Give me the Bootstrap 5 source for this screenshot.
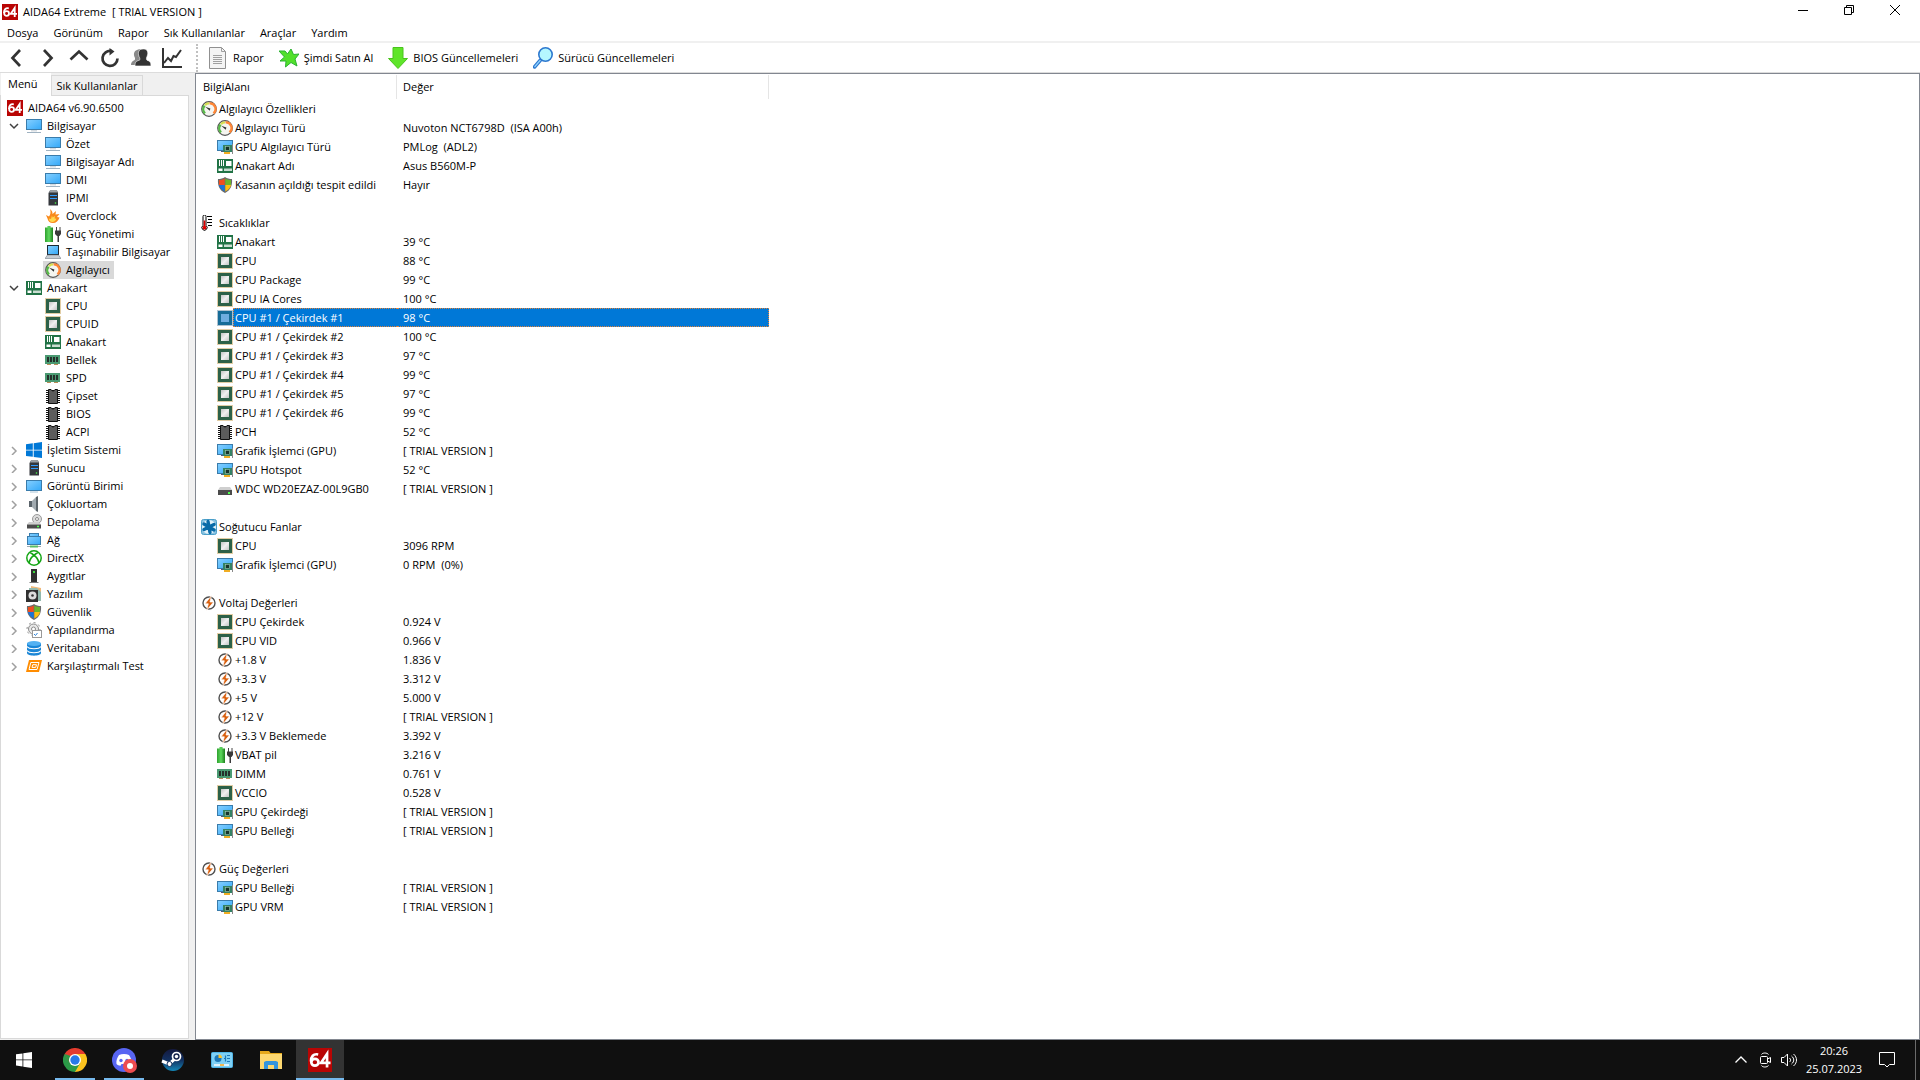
<!DOCTYPE html>
<html lang="tr">
<head>
<meta charset="utf-8">
<meta name="viewport" content="width=device-width, initial-scale=1">
<title>AIDA64 Extreme [ TRIAL VERSION ]</title>
<link href="https://cdn.jsdelivr.net/npm/bootstrap@5.3.0/dist/css/bootstrap.min.css" rel="stylesheet">
<style>
  body { font-family: "Open Sans", "Noto Sans", sans-serif; font-size: 11px; line-height: 18px; color: #000; background: #fff; }
  a, a:hover { color: inherit; text-decoration: none; }
  button { color: inherit; background: none; border: 0; padding: 0; }
  svg { display: block; flex: none; }
  .ic { width: 16px; height: 16px; }
  .keep-space { white-space: pre; }

  .title-strip { height: 24px; padding-left: 2px; }
  .title-strip .caption { margin-left: 5px; }
  .win-controls { margin-right: 2px; }
  .win-controls button { width: 46px; height: 20px; display: flex; align-items: center; justify-content: center; }
  .menu-strip { height: 19px; padding-left: 7px; gap: 15px; border-bottom: 2px solid #f0f0f0; }
  .tool-strip { height: 30px; border-bottom: 1px solid #dcdcdc; }
  .tool-nav { padding-left: 1px; }
  .tool-nav button { width: 31px; height: 28px; display: flex; align-items: center; justify-content: center; }
  .tool-sep { width: 2px; height: 28px; margin: 0 10px 0 9px; border-left: 2px dotted #c0c0c0; }
  .tool-action { display: flex; align-items: center; gap: 5px; margin-right: 15px; }
  .tool-action svg { width: 20px; height: 22px; }

  .side-pane { width: 195px; background: #f0f0f0; }
  .tab-strip { height: 22px; padding-left: 1px; }
  .tab-strip button { height: 20px; border: 1px solid #d9d9d9; border-bottom: 0; padding: 0 4px; width: 92px; }
  .tab-strip button.chosen { height: 23px; line-height: 21px; background: #fff; border: 0; width: 50px; padding: 0 7px 2px; text-align: left; z-index: 1; }
  .tree-box { background: #fff; border: 1px solid #d9d9d9; margin-right: 6px; margin-bottom: 1px; padding-top: 3px; }
  .tree-box ul { list-style: none; margin: 0; padding: 0; }
  .tree-row { height: 18px; display: flex; align-items: center; padding-left: 6px; }
  .tree-row button { width: 19px; height: 18px; display: flex; align-items: center; padding-left: 2px; }
  .tree-row a { display: flex; align-items: center; height: 18px; }
  .tree-row a span { padding: 0 4px 0 5px; white-space: nowrap; }
  .tree-box ul ul .tree-row { padding-left: 42px; }
  .tree-box ul ul .tree-row a { padding-left: 2px; }
  .tree-row a.current { background: #d9d9d9; }

  .detail-pane { border: 1px solid #828790; }
  .sensor-grid { width: 573px; table-layout: fixed; border-collapse: separate; border-spacing: 0; }
  .sensor-grid th { height: 25px; padding: 0 0 0 7px; font-weight: 400; }
  .sensor-grid th:last-child { padding-left: 6px; }
  .sensor-grid th span { display: block; height: 24px; line-height: 24px; border-right: 1px solid #e5e5e5; }
  .sensor-grid th:first-child { width: 201px; }
  .sensor-grid td { height: 19px; padding: 0 0 0 6px; white-space: pre; }
  .sensor-grid td:first-child { padding-left: 21px; }
  .sensor-grid .section td:first-child { padding-left: 5px; }
  .cell { display: flex; align-items: center; height: 19px; }
  .cell .lbl { padding-left: 2px; flex: 1; line-height: 19px; }
  .picked td:last-child { background: #0078d7; color: #fff; border: 1px dotted #e0823a; border-left: 0; line-height: 17px; }
  .picked .lbl { background: #0078d7; color: #fff; border: 1px dotted #e0823a; border-right: 0; padding-left: 1px; line-height: 17px; }

  .task-strip { height: 40px; background: #101010; color: #fff; }
  .task-strip button { height: 40px; display: flex; align-items: center; justify-content: center; }
  .apps { gap: 1px; margin-left: 3px; }
  .apps button, .start-btn { width: 48px; position: relative; }
  .apps .running::after { content: ""; position: absolute; left: 4px; right: 4px; bottom: 0; height: 2px; background: #76b9ed; }
  .apps .active-app { background: #333; }
  .apps .active-app::after { left: 0; right: 0; }
  .tray button { width: 24px; }
  .tray .clock { width: 66px; flex-direction: column; }
  .tray .notify { width: 40px; }
  .peek { width: 5px; border-left: 1px solid #6b6b6b; margin-left: 8px; }
</style>
<script src="https://cdn.jsdelivr.net/npm/bootstrap@5.3.0/dist/js/bootstrap.bundle.min.js"></script>
</head>
<body>

<svg width="0" height="0" class="position-absolute" aria-hidden="true">
  <defs>
    <linearGradient id="gScreen" x1="0" y1="0" x2="1" y2="1"><stop offset="0" stop-color="#86d0ff"/><stop offset="1" stop-color="#33a8f8"/></linearGradient>
    <linearGradient id="gDie" x1="0" y1="0" x2="1" y2="1"><stop offset="0" stop-color="#c4c4c4"/><stop offset=".5" stop-color="#f0f0f0"/><stop offset="1" stop-color="#c4c4c4"/></linearGradient>
    <linearGradient id="gBat"><stop offset="0" stop-color="#2ea12e"/><stop offset=".5" stop-color="#5fd95f"/><stop offset="1" stop-color="#1e7f1e"/></linearGradient>
    <linearGradient id="gSteam" x1="0" y1="0" x2="0" y2="1"><stop offset="0" stop-color="#14193f"/><stop offset=".5" stop-color="#12305f"/><stop offset="1" stop-color="#1387b8"/></linearGradient>
  </defs>
  <symbol id="aida" viewBox="0 0 16 16"><rect width="16" height="16" fill="#b90504"/><g fill="none" stroke="#fff" stroke-width="1.800"><path d="M6.800 4.300C3.500 3.600 2 5.800 2 9"/><ellipse cx="4.600" cy="9.500" rx="2.400" ry="2.300"/><path d="M12.700 13V3.900L8.700 9.900H15"/></g></symbol>
  <symbol id="pc" viewBox="0 0 16 16"><rect x=".5" y="1.500" width="15" height="10" fill="url(#gScreen)" stroke="#3a7cab"/><path d="M5 12h6v1.500H5z" fill="#d5dbe0"/><path d="M1 14.500h14" stroke="#9fb2c1"/></symbol>
  <symbol id="screen" viewBox="0 0 16 16"><rect x=".5" y="2.500" width="15" height="10" fill="url(#gScreen)" stroke="#3a7cab"/><path d="M4 14h8" stroke="#a9c3d5"/></symbol>
  <symbol id="server" viewBox="0 0 16 16"><path d="M3.500 3L5 .5h7L13 3v12.500H3.500z" fill="#34373c"/><path d="M4 2.500L5 .5h7l.5 2z" fill="#9aa0a6"/><path d="M5 5.500h7M5 8.500h7" stroke="#2f9bff" stroke-width="1.200"/><circle cx="10.500" cy="13" r=".8" fill="#4dff4d"/></symbol>
  <symbol id="flame" viewBox="0 0 16 16"><path d="M5 1c2 1.500 2.500 3 2.500 5L11 3l-.5 3.500L14.500 6 12 9l2.500.5C13.500 13 11 15 8 15c-3.500 0-5-2-5.500-4.500L1 7l3 1.500C5.500 6.500 6 4 5 1z" fill="#f98a1c"/><path d="M7 7.500l.500 2L10 8l-.5 2.500 2 .3C10.500 13 9 14 7.500 14 5 14 4 12.500 4 10.500l2 .5z" fill="#ffd84d"/></symbol>
  <symbol id="power" viewBox="0 0 16 16"><path d="M2.500 0h3v1.500H8V16H0V1.500h2.500z" fill="url(#gBat)"/><path d="M11.500 1v4M15 1v4" stroke="#444"/><path d="M10 4.500h6v3.500l-1.500 2H14v6h-1.500v-6H12l-2-2z" fill="#3a3a3a"/></symbol>
  <symbol id="laptop" viewBox="0 0 16 16"><rect x="2.500" y="1.500" width="11" height="9" fill="url(#gScreen)" stroke="#1d2a35"/><path d="M2.500 11h11l2.500 3.500H0z" fill="#c6ccd2" stroke="#768089" stroke-width=".6"/></symbol>
  <symbol id="gauge" viewBox="0 0 16 16"><circle cx="8" cy="8" r="7.300" fill="#f5f5f0" stroke="#555" stroke-width="1.200"/><g fill="none" stroke-width="2.400"><path d="M4 12.300A5.600 5.600 0 0 1 3.600 4.600" stroke="#57b947"/><path d="M4 4.100A5.600 5.600 0 0 1 8 2.400" stroke="#d7df50"/><path d="M8.500 2.400a5.600 5.600 0 0 1 4 9.900" stroke="#ff8636"/></g><path d="M4.200 5.800l5.200 1.600-.7 2.300z" fill="#333"/></symbol>
  <symbol id="board" viewBox="0 0 16 16"><rect y="1" width="16" height="14" fill="#217346"/><path d="M2.500 2v6M4.500 2v6M6.500 2v6" stroke="#fff"/><path d="M9 3h5.500v5H9zM1.500 10.500h4V13h-4z" fill="#fff"/><path d="M7 10.500h8V13H7z" fill="#c9ddd1"/></symbol>
  <symbol id="cpu" viewBox="0 0 16 16"><rect x=".5" y=".5" width="15" height="15" fill="none" stroke="#c29b4b" stroke-dasharray="1 1"/><rect x="1" y="1" width="14" height="14" fill="#2d6148"/><rect x="4" y="4" width="8" height="8" fill="url(#gDie)"/></symbol>
  <symbol id="cpuSel" viewBox="0 0 16 16"><rect x=".5" y=".5" width="15" height="15" fill="none" stroke="#6087a0" stroke-dasharray="1 1"/><rect x="1" y="1" width="14" height="14" fill="#166c98"/><rect x="4" y="4" width="8" height="8" fill="#6eade0"/></symbol>
  <symbol id="ram" viewBox="0 0 16 16"><rect y="3" width="15" height="9" fill="#4a9a72"/><path d="M2 5h2v5H2zM5 5h2v5H5zM8 5h2v5H8zM11 5h2v5h-2z" fill="#25302b"/><path d="M2 12.500h4M9 12.500h4" stroke="#b88a55"/></symbol>
  <symbol id="chip" viewBox="0 0 16 16"><path d="M1 2.500h14M1 4.500h14M1 6.500h14M1 8.500h14M1 10.500h14M1 12.500h14M1 14.500h14" stroke="#111"/><path d="M3.500 1.500H6l2 2 2-2h2.500v14h-9z" fill="#5c5c5c" stroke="#111"/></symbol>
  <symbol id="win" viewBox="0 0 16 16"><path d="M0 2.300l6.800-1v6.400H0zM7.700 1.200L16 0v7.700H7.700zM0 8.500h6.800v6.300L0 13.900zM7.700 8.500H16V16l-8.300-1.100z" fill="#0078d7"/></symbol>
  <symbol id="speaker" viewBox="0 0 16 16"><path d="M3 5h3v6H3z" fill="#5b646b"/><path d="M6 5l4-4v14l-4-4z" fill="#a2abb1"/><path d="M10 1l2-1v16l-2-1z" fill="#5c656b"/></symbol>
  <symbol id="disk" viewBox="0 0 16 16"><circle cx="11" cy="5" r="4.500" fill="#ddd" stroke="#999"/><circle cx="11" cy="5" r="1.500" fill="#fff" stroke="#888"/><path d="M3 8h10l2 2.500H1z" fill="#cfcfcf"/><rect x="1" y="10.500" width="14" height="4" fill="#4b4b4b"/><path d="M11 12.500h2" stroke="#4dff4d" stroke-width="1.400"/></symbol>
  <symbol id="net" viewBox="0 0 16 16"><rect x="3.500" y="1.500" width="9" height="6" fill="url(#gScreen)" stroke="#3a7cab"/><rect x="1.500" y="4.500" width="13" height="8" fill="url(#gScreen)" stroke="#3a7cab"/><path d="M1 14.500h3M12 14.500h3" stroke="#a0a8ae"/><path d="M4 14.500h8" stroke="#57bd65" stroke-width="2"/></symbol>
  <symbol id="xbox" viewBox="0 0 16 16"><circle cx="8" cy="8" r="7.200" fill="#fff" stroke="#14a514" stroke-width="1.500"/><path d="M3 13C4 9 6 6.500 8 5.500M13 13C12 9 10 6.500 8 5.500M4.200 3C6 3 7 4.500 8 5.500 9 4.500 10 3 11.800 3" fill="none" stroke="#14a514" stroke-width="1.700"/></symbol>
  <symbol id="device" viewBox="0 0 16 16"><path d="M5 1h6v13H5z" fill="#303030"/><path d="M3.500 14.500h9" stroke="#777"/><rect x="7" y="3" width="2" height="2" fill="#3ddb3d"/></symbol>
  <symbol id="soft" viewBox="0 0 16 16"><path d="M5 0l10 2v12H5z" fill="#f0b878"/><path d="M3 2h8l4 4v9H3z" fill="#93b9ae"/><rect y="4" width="12" height="12" fill="#303030"/><circle cx="6.500" cy="9.500" r="4" fill="#ddd"/><circle cx="6.500" cy="9.500" r="1.300" fill="#333"/></symbol>
  <symbol id="shield" viewBox="0 0 16 16"><path d="M8 0c2 1.500 4.500 2 7 2 .5 6-1 11-7 14C2 13 .5 8 1 2c2.500 0 5-.5 7-2z" fill="#6b6b6b"/><path d="M7.700 1.500V8H2V3c2 0 4-.5 5.700-1.500z" fill="#f04e1f"/><path d="M8.300 1.500V8H14V3c-2 0-4-.5-5.700-1.500z" fill="#6cb52d"/><path d="M7.700 8v6.500C4 12.500 2.500 10.500 2 8z" fill="#1b74d8"/><path d="M8.300 8v6.500C12 12.500 13.500 10.500 14 8z" fill="#fdc010"/></symbol>
  <symbol id="config" viewBox="0 0 16 16"><circle cx="7.500" cy="7" r="5" fill="#e8e8e8" stroke="#8b8b8b"/><circle cx="7.500" cy="7" r="6.500" fill="none" stroke="#8b8b8b" stroke-dasharray="2 3"/><circle cx="7.500" cy="7" r="2" fill="#fff" stroke="#8b8b8b"/><rect x="6.500" y="8.500" width="9" height="7" fill="#fff" stroke="#999"/><path d="M8 12l1.500 1.500L11.500 11" fill="none" stroke="#2b82d9"/></symbol>
  <symbol id="db" viewBox="0 0 16 16"><path d="M1 3v10c0 3.500 14 3.500 14 0V3z" fill="#1b86d6"/><ellipse cx="8" cy="3.500" rx="7" ry="2.500" fill="#53b1f2"/><path d="M1 6.500c2 3 12 3 14 0M1 10.500c2 3 12 3 14 0" fill="none" stroke="#fff" stroke-width="1.200"/></symbol>
  <symbol id="bench" viewBox="0 0 16 16"><path d="M3 2h13l-3 12H0z" fill="#ff8c00"/><path d="M4.800 4.500h8.200l-2 7H3z" fill="none" stroke="#fff"/><path d="M6.800 6.700h3.700l-.8 2.700H6z" fill="none" stroke="#fff"/></symbol>
  <symbol id="gpu" viewBox="0 0 16 16"><rect x=".5" y="1.500" width="15" height="10" fill="url(#gScreen)" stroke="#3a7cab"/><path d="M4 12.500h4" stroke="#557"/><rect x="6" y="6" width="9" height="7" fill="#338264"/><rect x="8.500" y="7.500" width="4" height="4" fill="#17352a" stroke="#9ec9b2" stroke-width=".6"/><path d="M7 14h6" stroke="#f0ad22" stroke-width="2"/><path d="M15.500 5v10" stroke="#888"/></symbol>
  <symbol id="thermo" viewBox="0 0 16 16"><path d="M2 1.500a1.500 1.500 0 0 1 3 0v9a2.600 2.600 0 1 1-3 0z" fill="#fff" stroke="#000"/><path d="M3.500 5.500v7" stroke="#e00000" stroke-width="1.600"/><circle cx="3.500" cy="12.700" r="1.900" fill="#e00000"/><path d="M6 1.500h5M7 4.500h4M6 7.500h5M7 10.500h4" stroke="#000"/></symbol>
  <symbol id="drive" viewBox="0 0 16 16"><path d="M3 6h10l2 3H1z" fill="#cfcfcf"/><rect x="1" y="9" width="14" height="5" fill="#4b4b4b"/><rect x="11" y="11" width="2" height="2" fill="#4dff4d"/></symbol>
  <symbol id="fan" viewBox="0 0 16 16"><rect x=".5" y=".5" width="15" height="15" rx="2" fill="#88c2e0" stroke="#4b9fc9"/><circle cx="8" cy="8" r="7" fill="#e5f4fb"/><g fill="none" stroke="#086ba8" stroke-width="3.400" stroke-linecap="round"><path d="M8 8L7 2.500M8 8l5-2.500M8 8l5 3M8 8l1 5.500M8 8l-5 2.500M8 8L3 5"/></g></symbol>
  <symbol id="volt" viewBox="0 0 16 16"><circle cx="8" cy="8" r="6" fill="#fff" stroke="#505050" stroke-width="1.400"/><path d="M10.500.5L4 8.800h3.300L5.500 15.500 12.500 7H9z" fill="#d9600f" stroke="#fff" stroke-width=".7"/></symbol>
  <symbol id="open" viewBox="0 0 10 10"><path d="M1 3l4 4 4-4" fill="none" stroke="#404040" stroke-width="1.500"/></symbol>
  <symbol id="shut" viewBox="0 0 10 10"><path d="M3 2l4 4-4 4" fill="none" stroke="#a0a0a0" stroke-width="1.500"/></symbol>
</svg>

<div class="d-flex flex-column vh-100 overflow-hidden">
  <header>
    <div class="title-strip d-flex align-items-center">
      <svg class="ic"><use href="#aida"/></svg>
      <span class="caption keep-space">AIDA64 Extreme  [ TRIAL VERSION ]</span>
      <div class="win-controls d-flex ms-auto align-self-start">
        <button type="button" aria-label="Simge durumuna küçült"><svg width="10" height="10"><path d="M0 5.500h10" stroke="#000"/></svg></button>
        <button type="button" aria-label="Önceki boyut"><svg width="10" height="10" fill="none" stroke="#000"><path d="M.5 2.500h7v7h-7zM2.500 2.500v-2h7v7h-2"/></svg></button>
        <button type="button" aria-label="Kapat"><svg width="10" height="10"><path d="M0 0l10 10M10 0L0 10" stroke="#000"/></svg></button>
      </div>
    </div>
    <nav class="menu-strip d-flex align-items-center">
      <a href="#">Dosya</a><a href="#">Görünüm</a><a href="#">Rapor</a><a href="#">Sık Kullanılanlar</a><a href="#">Araçlar</a><a href="#">Yardım</a>
    </nav>
    <div class="tool-strip d-flex align-items-center">
      <div class="tool-nav d-flex">
        <button type="button" aria-label="Geri"><svg width="20" height="20" fill="none" stroke="#333" stroke-width="2.700"><path d="M13 2L5.500 10l7.500 8"/></svg></button>
        <button type="button" aria-label="İleri"><svg width="20" height="20" fill="none" stroke="#333" stroke-width="2.700"><path d="M6 2l7.500 8L6 18"/></svg></button>
        <button type="button" aria-label="Yukarı"><svg width="20" height="20" fill="none" stroke="#333" stroke-width="2.700"><path d="M1.500 11.500L10 3.500l8.500 8"/></svg></button>
        <button type="button" aria-label="Yenile"><svg width="20" height="20" fill="none" stroke="#333" stroke-width="2.700"><path d="M17.500 10.500a7.500 7.500 0 1 1-6-7.400"/><path d="M9.500 0l5 3.500-5 4z" fill="#333" stroke="none"/></svg></button>
        <button type="button" aria-label="Kullanıcılar"><svg width="20" height="20"><path d="M6 2c3-2 6 0 5 5l-2 4 1 6H0c0-4 3-4 4-5.500V10C2 6 3 3 6 2z" fill="#8a8a8a"/><path d="M12 1c4-.5 6 3 4 7.500-1 1.500-.5 3.500 0 3.700 3 1 4 2 4 5.800H4c0-4 1-4.800 4.500-5.800.5-.5.500-2.500-.5-3.700C6.500 4 8 1 12 1z" fill="#333" stroke="#fff" stroke-width=".6"/></svg></button>
        <button type="button" aria-label="Grafik"><svg width="20" height="20" fill="none" stroke="#333" stroke-width="2"><path d="M1 0v19h19M2 15l4-5 3 3 2.500-5 2.500 1 5-7"/></svg></button>
      </div>
      <div class="tool-sep"></div>
      <button type="button" class="tool-action"><svg viewBox="0 0 20 22"><path d="M1.500.5h12l4 4v17h-16z" fill="#f4f4f4" stroke="#909090"/><path d="M13.500.5v4h4M5 8.500h9M5 10.500h9M5 12.500h9M5 14.500h9M5 16.500h9" fill="none" stroke="#a0a0a0"/></svg>Rapor</button>
      <button type="button" class="tool-action"><svg viewBox="0 0 20 22"><path d="M0 4h6l2.500 3L12 2l2.500 5.500 5.500-.5-4 5L18 19l-6-3.500L6.500 20 7 14H1l4.500-4z" fill="#52e02b" stroke="#2bb232"/></svg>Şimdi Satın Al</button>
      <button type="button" class="tool-action"><svg viewBox="0 0 20 22"><path d="M5 .5h10v11h4.500L10 21.500.500 11.500H5z" fill="#5fe52a" stroke="#49c41c"/></svg>BIOS Güncellemeleri</button>
      <button type="button" class="tool-action"><svg viewBox="0 0 20 22"><path d="M7.500 13L1.500 20" stroke="#2d78cf" stroke-width="3.500" stroke-linecap="round"/><path d="M7.500 13L1.500 20" stroke="#8fd2ff" stroke-width="1.200"/><circle cx="12.500" cy="7.500" r="6.700" fill="#b5f7ff" stroke="#2d78cf" stroke-width="1.600"/></svg>Sürücü Güncellemeleri</button>
    </div>
  </header>

  <main class="d-flex flex-fill overflow-hidden">
    <aside class="side-pane d-flex flex-column flex-shrink-0">
      <div class="tab-strip d-flex align-items-end">
        <button type="button" class="chosen align-self-start">Menü</button>
        <button type="button">Sık Kullanılanlar</button>
      </div>
      <nav class="tree-box flex-fill">
        <ul>
          <li><div class="tree-row"><a href="#"><svg class="ic"><use href="#aida"/></svg><span>AIDA64 v6.90.6500</span></a></div></li>
          <li><div class="tree-row"><button type="button" aria-label="Daralt"><svg width="10" height="10"><use href="#open"/></svg></button><a href="#"><svg class="ic"><use href="#pc"/></svg><span>Bilgisayar</span></a></div>
            <ul>
              <li><div class="tree-row"><a href="#"><svg class="ic"><use href="#pc"/></svg><span>Özet</span></a></div></li>
              <li><div class="tree-row"><a href="#"><svg class="ic"><use href="#pc"/></svg><span>Bilgisayar Adı</span></a></div></li>
              <li><div class="tree-row"><a href="#"><svg class="ic"><use href="#pc"/></svg><span>DMI</span></a></div></li>
              <li><div class="tree-row"><a href="#"><svg class="ic"><use href="#server"/></svg><span>IPMI</span></a></div></li>
              <li><div class="tree-row"><a href="#"><svg class="ic"><use href="#flame"/></svg><span>Overclock</span></a></div></li>
              <li><div class="tree-row"><a href="#"><svg class="ic"><use href="#power"/></svg><span>Güç Yönetimi</span></a></div></li>
              <li><div class="tree-row"><a href="#"><svg class="ic"><use href="#laptop"/></svg><span>Taşınabilir Bilgisayar</span></a></div></li>
              <li><div class="tree-row"><a href="#" class="current" aria-current="page"><svg class="ic"><use href="#gauge"/></svg><span>Algılayıcı</span></a></div></li>
            </ul>
          </li>
          <li><div class="tree-row"><button type="button" aria-label="Daralt"><svg width="10" height="10"><use href="#open"/></svg></button><a href="#"><svg class="ic"><use href="#board"/></svg><span>Anakart</span></a></div>
            <ul>
              <li><div class="tree-row"><a href="#"><svg class="ic"><use href="#cpu"/></svg><span>CPU</span></a></div></li>
              <li><div class="tree-row"><a href="#"><svg class="ic"><use href="#cpu"/></svg><span>CPUID</span></a></div></li>
              <li><div class="tree-row"><a href="#"><svg class="ic"><use href="#board"/></svg><span>Anakart</span></a></div></li>
              <li><div class="tree-row"><a href="#"><svg class="ic"><use href="#ram"/></svg><span>Bellek</span></a></div></li>
              <li><div class="tree-row"><a href="#"><svg class="ic"><use href="#ram"/></svg><span>SPD</span></a></div></li>
              <li><div class="tree-row"><a href="#"><svg class="ic"><use href="#chip"/></svg><span>Çipset</span></a></div></li>
              <li><div class="tree-row"><a href="#"><svg class="ic"><use href="#chip"/></svg><span>BIOS</span></a></div></li>
              <li><div class="tree-row"><a href="#"><svg class="ic"><use href="#chip"/></svg><span>ACPI</span></a></div></li>
            </ul>
          </li>
          <li><div class="tree-row"><button type="button" aria-label="Genişlet"><svg width="10" height="10"><use href="#shut"/></svg></button><a href="#"><svg class="ic"><use href="#win"/></svg><span>İşletim Sistemi</span></a></div></li>
          <li><div class="tree-row"><button type="button" aria-label="Genişlet"><svg width="10" height="10"><use href="#shut"/></svg></button><a href="#"><svg class="ic"><use href="#server"/></svg><span>Sunucu</span></a></div></li>
          <li><div class="tree-row"><button type="button" aria-label="Genişlet"><svg width="10" height="10"><use href="#shut"/></svg></button><a href="#"><svg class="ic"><use href="#screen"/></svg><span>Görüntü Birimi</span></a></div></li>
          <li><div class="tree-row"><button type="button" aria-label="Genişlet"><svg width="10" height="10"><use href="#shut"/></svg></button><a href="#"><svg class="ic"><use href="#speaker"/></svg><span>Çokluortam</span></a></div></li>
          <li><div class="tree-row"><button type="button" aria-label="Genişlet"><svg width="10" height="10"><use href="#shut"/></svg></button><a href="#"><svg class="ic"><use href="#disk"/></svg><span>Depolama</span></a></div></li>
          <li><div class="tree-row"><button type="button" aria-label="Genişlet"><svg width="10" height="10"><use href="#shut"/></svg></button><a href="#"><svg class="ic"><use href="#net"/></svg><span>Ağ</span></a></div></li>
          <li><div class="tree-row"><button type="button" aria-label="Genişlet"><svg width="10" height="10"><use href="#shut"/></svg></button><a href="#"><svg class="ic"><use href="#xbox"/></svg><span>DirectX</span></a></div></li>
          <li><div class="tree-row"><button type="button" aria-label="Genişlet"><svg width="10" height="10"><use href="#shut"/></svg></button><a href="#"><svg class="ic"><use href="#device"/></svg><span>Aygıtlar</span></a></div></li>
          <li><div class="tree-row"><button type="button" aria-label="Genişlet"><svg width="10" height="10"><use href="#shut"/></svg></button><a href="#"><svg class="ic"><use href="#soft"/></svg><span>Yazılım</span></a></div></li>
          <li><div class="tree-row"><button type="button" aria-label="Genişlet"><svg width="10" height="10"><use href="#shut"/></svg></button><a href="#"><svg class="ic"><use href="#shield"/></svg><span>Güvenlik</span></a></div></li>
          <li><div class="tree-row"><button type="button" aria-label="Genişlet"><svg width="10" height="10"><use href="#shut"/></svg></button><a href="#"><svg class="ic"><use href="#config"/></svg><span>Yapılandırma</span></a></div></li>
          <li><div class="tree-row"><button type="button" aria-label="Genişlet"><svg width="10" height="10"><use href="#shut"/></svg></button><a href="#"><svg class="ic"><use href="#db"/></svg><span>Veritabanı</span></a></div></li>
          <li><div class="tree-row"><button type="button" aria-label="Genişlet"><svg width="10" height="10"><use href="#shut"/></svg></button><a href="#"><svg class="ic"><use href="#bench"/></svg><span>Karşılaştırmalı Test</span></a></div></li>
        </ul>
      </nav>
    </aside>

    <section class="detail-pane flex-fill overflow-hidden">
      <table class="sensor-grid">
        <thead><tr><th scope="col"><span>BilgiAlanı</span></th><th scope="col"><span>Değer</span></th></tr></thead>
        <tbody>
          <tr class="section"><td><div class="cell"><svg class="ic"><use href="#gauge"/></svg><span class="lbl">Algılayıcı Özellikleri</span></div></td><td></td></tr>
          <tr><td><div class="cell"><svg class="ic"><use href="#gauge"/></svg><span class="lbl">Algılayıcı Türü</span></div></td><td>Nuvoton NCT6798D  (ISA A00h)</td></tr>
          <tr><td><div class="cell"><svg class="ic"><use href="#gpu"/></svg><span class="lbl">GPU Algılayıcı Türü</span></div></td><td>PMLog  (ADL2)</td></tr>
          <tr><td><div class="cell"><svg class="ic"><use href="#board"/></svg><span class="lbl">Anakart Adı</span></div></td><td>Asus B560M-P</td></tr>
          <tr><td><div class="cell"><svg class="ic"><use href="#shield"/></svg><span class="lbl">Kasanın açıldığı tespit edildi</span></div></td><td>Hayır</td></tr>
          <tr><td></td><td></td></tr>
          <tr class="section"><td><div class="cell"><svg class="ic"><use href="#thermo"/></svg><span class="lbl">Sıcaklıklar</span></div></td><td></td></tr>
          <tr><td><div class="cell"><svg class="ic"><use href="#board"/></svg><span class="lbl">Anakart</span></div></td><td>39 °C</td></tr>
          <tr><td><div class="cell"><svg class="ic"><use href="#cpu"/></svg><span class="lbl">CPU</span></div></td><td>88 °C</td></tr>
          <tr><td><div class="cell"><svg class="ic"><use href="#cpu"/></svg><span class="lbl">CPU Package</span></div></td><td>99 °C</td></tr>
          <tr><td><div class="cell"><svg class="ic"><use href="#cpu"/></svg><span class="lbl">CPU IA Cores</span></div></td><td>100 °C</td></tr>
          <tr class="picked"><td><div class="cell"><svg class="ic"><use href="#cpuSel"/></svg><span class="lbl">CPU #1 / Çekirdek #1</span></div></td><td>98 °C</td></tr>
          <tr><td><div class="cell"><svg class="ic"><use href="#cpu"/></svg><span class="lbl">CPU #1 / Çekirdek #2</span></div></td><td>100 °C</td></tr>
          <tr><td><div class="cell"><svg class="ic"><use href="#cpu"/></svg><span class="lbl">CPU #1 / Çekirdek #3</span></div></td><td>97 °C</td></tr>
          <tr><td><div class="cell"><svg class="ic"><use href="#cpu"/></svg><span class="lbl">CPU #1 / Çekirdek #4</span></div></td><td>99 °C</td></tr>
          <tr><td><div class="cell"><svg class="ic"><use href="#cpu"/></svg><span class="lbl">CPU #1 / Çekirdek #5</span></div></td><td>97 °C</td></tr>
          <tr><td><div class="cell"><svg class="ic"><use href="#cpu"/></svg><span class="lbl">CPU #1 / Çekirdek #6</span></div></td><td>99 °C</td></tr>
          <tr><td><div class="cell"><svg class="ic"><use href="#chip"/></svg><span class="lbl">PCH</span></div></td><td>52 °C</td></tr>
          <tr><td><div class="cell"><svg class="ic"><use href="#gpu"/></svg><span class="lbl">Grafik İşlemci (GPU)</span></div></td><td>[ TRIAL VERSION ]</td></tr>
          <tr><td><div class="cell"><svg class="ic"><use href="#gpu"/></svg><span class="lbl">GPU Hotspot</span></div></td><td>52 °C</td></tr>
          <tr><td><div class="cell"><svg class="ic"><use href="#drive"/></svg><span class="lbl">WDC WD20EZAZ-00L9GB0</span></div></td><td>[ TRIAL VERSION ]</td></tr>
          <tr><td></td><td></td></tr>
          <tr class="section"><td><div class="cell"><svg class="ic"><use href="#fan"/></svg><span class="lbl">Soğutucu Fanlar</span></div></td><td></td></tr>
          <tr><td><div class="cell"><svg class="ic"><use href="#cpu"/></svg><span class="lbl">CPU</span></div></td><td>3096 RPM</td></tr>
          <tr><td><div class="cell"><svg class="ic"><use href="#gpu"/></svg><span class="lbl">Grafik İşlemci (GPU)</span></div></td><td>0 RPM  (0%)</td></tr>
          <tr><td></td><td></td></tr>
          <tr class="section"><td><div class="cell"><svg class="ic"><use href="#volt"/></svg><span class="lbl">Voltaj Değerleri</span></div></td><td></td></tr>
          <tr><td><div class="cell"><svg class="ic"><use href="#cpu"/></svg><span class="lbl">CPU Çekirdek</span></div></td><td>0.924 V</td></tr>
          <tr><td><div class="cell"><svg class="ic"><use href="#cpu"/></svg><span class="lbl">CPU VID</span></div></td><td>0.966 V</td></tr>
          <tr><td><div class="cell"><svg class="ic"><use href="#volt"/></svg><span class="lbl">+1.8 V</span></div></td><td>1.836 V</td></tr>
          <tr><td><div class="cell"><svg class="ic"><use href="#volt"/></svg><span class="lbl">+3.3 V</span></div></td><td>3.312 V</td></tr>
          <tr><td><div class="cell"><svg class="ic"><use href="#volt"/></svg><span class="lbl">+5 V</span></div></td><td>5.000 V</td></tr>
          <tr><td><div class="cell"><svg class="ic"><use href="#volt"/></svg><span class="lbl">+12 V</span></div></td><td>[ TRIAL VERSION ]</td></tr>
          <tr><td><div class="cell"><svg class="ic"><use href="#volt"/></svg><span class="lbl">+3.3 V Beklemede</span></div></td><td>3.392 V</td></tr>
          <tr><td><div class="cell"><svg class="ic"><use href="#power"/></svg><span class="lbl">VBAT pil</span></div></td><td>3.216 V</td></tr>
          <tr><td><div class="cell"><svg class="ic"><use href="#ram"/></svg><span class="lbl">DIMM</span></div></td><td>0.761 V</td></tr>
          <tr><td><div class="cell"><svg class="ic"><use href="#cpu"/></svg><span class="lbl">VCCIO</span></div></td><td>0.528 V</td></tr>
          <tr><td><div class="cell"><svg class="ic"><use href="#gpu"/></svg><span class="lbl">GPU Çekirdeği</span></div></td><td>[ TRIAL VERSION ]</td></tr>
          <tr><td><div class="cell"><svg class="ic"><use href="#gpu"/></svg><span class="lbl">GPU Belleği</span></div></td><td>[ TRIAL VERSION ]</td></tr>
          <tr><td></td><td></td></tr>
          <tr class="section"><td><div class="cell"><svg class="ic"><use href="#volt"/></svg><span class="lbl">Güç Değerleri</span></div></td><td></td></tr>
          <tr><td><div class="cell"><svg class="ic"><use href="#gpu"/></svg><span class="lbl">GPU Belleği</span></div></td><td>[ TRIAL VERSION ]</td></tr>
          <tr><td><div class="cell"><svg class="ic"><use href="#gpu"/></svg><span class="lbl">GPU VRM</span></div></td><td>[ TRIAL VERSION ]</td></tr>
        </tbody>
      </table>
    </section>
  </main>

  <footer class="task-strip d-flex flex-shrink-0">
    <button type="button" class="start-btn" aria-label="Başlat"><svg width="16" height="16" viewBox="0 0 16 16"><path d="M0 2.300l6.500-.9v6.100H0zM7.300 1.300L16 0v7.500H7.300zM0 8.300h6.500v6.200L0 13.600zM7.300 8.300H16V16l-8.700-1.300z" fill="#fff"/></svg></button>
    <div class="apps d-flex">
      <button type="button" class="running" aria-label="Chrome"><svg width="24" height="24" viewBox="0 0 24 24"><path d="M12 12L1.600 6A12 12 0 0 1 22.400 6z" fill="#e33b2e"/><path d="M12 12l10.400-6A12 12 0 0 1 12 24z" fill="#fcc31e"/><path d="M1.600 6A12 12 0 0 0 12 24l5.200-9L12 12z" fill="#2b9a47"/><path d="M12 6h10.400l-5.200 9z" fill="#fcc31e"/><path d="M1.600 6h20.800H12L6.800 15z" fill="#e33b2e"/><path d="M1.600 6L6.800 15 12 18l-1.500-9z" fill="#2b9a47"/><circle cx="12" cy="12" r="6" fill="#fff"/><circle cx="12" cy="12" r="4.700" fill="#2779e8"/></svg></button>
      <button type="button" class="running" aria-label="Discord"><svg width="26" height="26" viewBox="0 0 26 26"><circle cx="13" cy="13" r="12" fill="#5865f2"/><path d="M8 8c3-1.500 7-1.500 10 0 2 3 3 6 2.500 9-1 1-2.500 1.500-4 1.700L15.500 17h-5L9.500 18.700C8 18.500 6.500 18 5.500 17 5 14 6 11 8 8z" fill="#fff"/><circle cx="10" cy="13.500" r="1.700" fill="#5865f2"/><circle cx="16" cy="13.500" r="1.700" fill="#5865f2"/><circle cx="19" cy="19" r="7" fill="#ed4c50"/><circle cx="19" cy="19" r="3" fill="#fff"/></svg></button>
      <button type="button" aria-label="Steam"><svg width="24" height="24" viewBox="0 0 24 24"><circle cx="12" cy="12" r="11" fill="url(#gSteam)"/><path d="M1 13l7 3 6-5 3-3" stroke="#fff" stroke-width="3" fill="none"/><circle cx="15.500" cy="8.500" r="4" fill="#16244c" stroke="#fff" stroke-width="1.700"/><circle cx="15.500" cy="8.500" r="1.700" fill="#fff"/><circle cx="8.500" cy="16" r="2.500" fill="#fff" stroke="#16305c"/></svg></button>
      <button type="button" aria-label="Denetim Masası"><svg width="22" height="22" viewBox="0 0 22 22"><rect x=".5" y="3.500" width="21" height="15" rx="1" fill="#7fd0f5" stroke="#4fb4e6"/><circle cx="7" cy="9.500" r="3.500" fill="#1c77b8"/><path d="M7.500 9V5.500A3.500 3.500 0 0 1 11 9z" fill="#ffc229"/><path d="M16 6.500h3M16 9.500h3M16 12.500h3M13 9.500h2M14.500 6.500v6" stroke="#1c77b8" stroke-width="1.200" fill="none"/><path d="M3 16h15" stroke="#fff" stroke-width="1.500"/><path d="M9 16h4" stroke="#f9a51a" stroke-width="1.500"/></svg></button>
      <button type="button" aria-label="Dosya Gezgini"><svg width="22" height="22" viewBox="0 0 22 22"><path d="M0 2h9l1.500 2H22v16H0z" fill="#e5a81c"/><path d="M0 5h22v15H0z" fill="#fdd870"/><path d="M4 20v-7l2-1h10l2 1v7h-4v-4H8v4z" fill="#3495dd"/></svg></button>
      <button type="button" class="running active-app" aria-label="AIDA64"><svg width="24" height="24"><use href="#aida"/></svg></button>
    </div>
    <div class="tray d-flex ms-auto">
      <button type="button" aria-label="Gizli simgeler"><svg width="12" height="12" fill="none" stroke="#fff" stroke-width="1.300"><path d="M.5 8.500L6 3l5.500 5.500"/></svg></button>
      <button type="button" aria-label="Kamera"><svg width="14" height="16" fill="none" stroke="#fff"><rect x="2.500" y="4.500" width="7" height="7" rx="1"/><path d="M9.500 7l3-1.500v5L9.500 9M3.500 2.500c1-2 5.500-2 7 0M3.500 13.500c1 2 5.500 2 7 0"/></svg></button>
      <button type="button" aria-label="Ses"><svg width="18" height="16" fill="none" stroke="#fff"><path d="M1.500 5.500h2.500L7.500 2v12L4 10.500H1.500zM9.500 6c1.500 1.500 1.500 3 0 4M11.500 4c3 2.500 3 5.500 0 8M13.500 2c4 3.500 4 8.500 0 12"/></svg></button>
      <button type="button" class="clock"><span>20:26</span><span>25.07.2023</span></button>
      <button type="button" class="notify" aria-label="Bildirimler"><svg width="16" height="16" fill="none" stroke="#fff"><path d="M.500.500h15v12h-5L8 15l-2.500-2.500h-5z"/></svg></button>
      <div class="peek"></div>
    </div>
  </footer>
</div>
</body>
</html>
